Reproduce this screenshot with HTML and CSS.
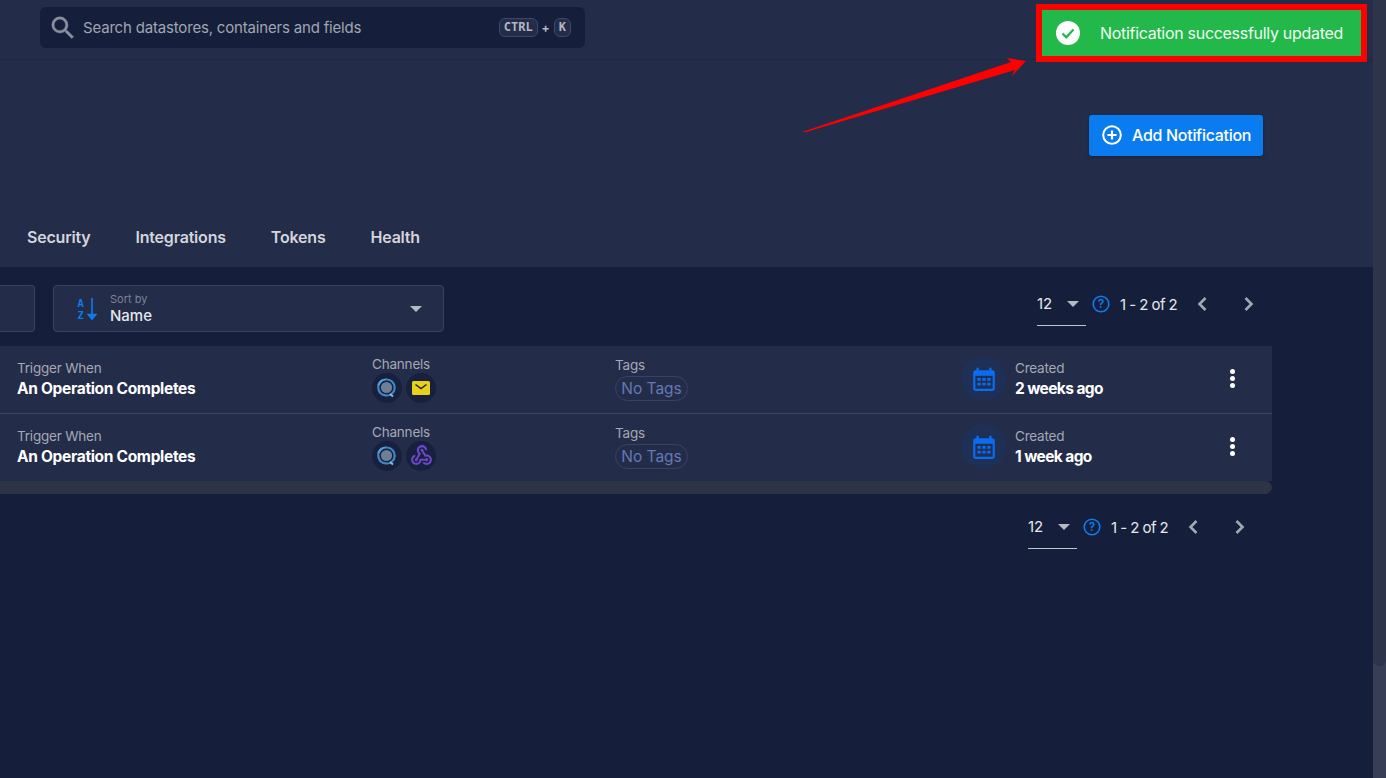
FILE: index.html
```html
<!DOCTYPE html>
<html lang="en">
<head>
    <meta charset="UTF-8">
    <meta name="viewport" content="width=device-width, initial-scale=1.0">
    <title>Settings - Notifications</title>
    <link rel="stylesheet" href="styles.css">
</head>
<body>
    <div class="page">
        <div class="content">
            <header class="top-section">
                <div class="topbar">
                    <div class="search">
                        <svg class="search-icon" viewBox="0 0 24 24" width="30" height="30"><path fill="#8b90a0" stroke="#8b90a0" stroke-width="0.3" d="M15.5 14h-.79l-.28-.27A6.47 6.47 0 0 0 16 9.5 6.5 6.5 0 1 0 9.5 16c1.61 0 3.09-.59 4.23-1.57l.27.28v.79l5 4.99L20.49 19l-4.99-5zm-6 0C7.01 14 5 11.99 5 9.5S7.01 5 9.5 5 14 7.01 14 9.5 11.99 14 9.5 14z"/></svg>
                        <span class="search-text">Search datastores, containers and fields</span>
                        <span class="keys"><kbd>CTRL</kbd><b>+</b><kbd>K</kbd></span>
                    </div>
                </div>
                <div class="action-row">
                    <button class="add-btn">
                        <svg viewBox="0 0 24 24" width="22" height="22"><circle cx="12" cy="12" r="9.6" fill="none" stroke="#fff" stroke-width="2.2"/><path d="M12 7v10M7 12h10" stroke="#fff" stroke-width="2.4"/></svg>
                        Add Notification
                    </button>
                </div>
                <nav class="tabs">
                    <a>Security</a>
                    <a>Integrations</a>
                    <a>Tokens</a>
                    <a>Health</a>
                </nav>
            </header>

            <main class="main">
                <div class="toolbar">
                    <div class="stub-box"></div>
                    <div class="sort-box">
                        <svg class="az-icon" viewBox="0 0 24 24" width="24" height="24">
                            <text x="0.5" y="9.5" class="az-letter">A</text>
                            <text x="0.5" y="22" class="az-letter">Z</text>
                            <path d="M15 1v19M11.2 17.5l3.800 4.700 3.800-4.700z" stroke="#0a7cf0" stroke-width="1.6" fill="#0a7cf0"/>
                        </svg>
                        <div class="sort-text">
                            <small>Sort by</small>
                            <span>Name</span>
                        </div>
                        <i class="caret sort-caret"></i>
                    </div>
                    <div class="pager">
                        <div class="per-page"><span>12</span><i class="caret"></i></div>
                        <svg class="help" viewBox="0 0 18 18" width="18" height="18"><circle cx="9" cy="9" r="7.800" fill="none" stroke="#0a7cf0" stroke-width="1.600"/><text x="9" y="13" class="help-mark">?</text></svg>
                        <span class="range">1 - 2 of 2</span>
                        <svg class="chev" viewBox="0 0 12 16" width="12" height="16"><path d="M9.500 2L3.500 8l6 6" fill="none" stroke="#a3a7b4" stroke-width="2.600"/></svg>
                        <svg class="chev chev-next" viewBox="0 0 12 16" width="12" height="16"><path d="M2.500 2l6 6-6 6" fill="none" stroke="#a3a7b4" stroke-width="2.600"/></svg>
                    </div>
                </div>

                <div class="list">
                    <div class="row">
                        <div class="cell">
                            <small>Trigger When</small>
                            <strong>An Operation Completes</strong>
                        </div>
                        <div class="cell cell-channels">
                            <small>Channels</small>
                            <div class="channels">
                                <span class="channel"><svg viewBox="0 0 30 30" width="30" height="30"><use href="#app-logo"/></svg></span>
                                <span class="channel"><svg viewBox="0 0 30 30" width="30" height="30"><rect x="6" y="8" width="18" height="14" rx="1.500" fill="#e8d118"/><path d="M9.500 11.500l5.500 4 5.500-4" fill="none" stroke="#1e2740" stroke-width="1.500"/></svg></span>
                            </div>
                        </div>
                        <div class="cell cell-tags">
                            <small>Tags</small>
                            <span class="chip">No Tags</span>
                        </div>
                        <div class="created">
                            <span class="cal"><svg viewBox="0 0 24 24" width="26" height="26"><use href="#calendar"/></svg></span>
                            <div class="cell">
                                <small>Created</small>
                                <strong>2 weeks ago</strong>
                            </div>
                        </div>
                        <div class="dots"><i></i><i></i><i></i></div>
                    </div>
                    <div class="row">
                        <div class="cell">
                            <small>Trigger When</small>
                            <strong>An Operation Completes</strong>
                        </div>
                        <div class="cell cell-channels">
                            <small>Channels</small>
                            <div class="channels">
                                <span class="channel"><svg viewBox="0 0 30 30" width="30" height="30"><use href="#app-logo"/></svg></span>
                                <span class="channel"><svg viewBox="0 0 24 24" width="25" height="25"><path fill="#6d45c9" d="M10 15h5.880c.27-.31.67-.5 1.120-.5.83 0 1.500.67 1.500 1.500s-.67 1.500-1.500 1.500c-.44 0-.84-.19-1.120-.5H11.900c-.46 2.280-2.480 4-4.900 4-2.760 0-5-2.240-5-5 0-2.420 1.720-4.440 4-4.900v2.070c-1.160.41-2 1.530-2 2.830 0 1.650 1.350 3 3 3s3-1.350 3-3v-1zm2.500-11c1.650 0 3 1.350 3 3h2c0-2.760-2.240-5-5-5s-5 2.240-5 5c0 1.430.6 2.710 1.550 3.620l-2.350 3.900c-.68.14-1.200.75-1.200 1.480 0 .83.67 1.500 1.500 1.500s1.500-.67 1.500-1.500c0-.16-.02-.31-.07-.45l3.380-5.630C10.490 9.610 9.500 8.420 9.500 7c0-1.650 1.350-3 3-3zm4.500 9c-.64 0-1.230.2-1.720.54l-3.050-5.070C11.530 8.350 11 7.740 11 7c0-.83.67-1.500 1.500-1.500S14 6.170 14 7c0 .15-.02.29-.06.43l2.190 3.650c.28-.05.57-.08.87-.08 2.760 0 5 2.240 5 5s-2.240 5-5 5c-1.850 0-3.470-1.010-4.330-2.500h2.670c.48.32 1.050.5 1.660.5 1.650 0 3-1.350 3-3s-1.350-3-3-3z"/></svg></span>
                            </div>
                        </div>
                        <div class="cell cell-tags">
                            <small>Tags</small>
                            <span class="chip">No Tags</span>
                        </div>
                        <div class="created">
                            <span class="cal"><svg viewBox="0 0 24 24" width="26" height="26"><use href="#calendar"/></svg></span>
                            <div class="cell">
                                <small>Created</small>
                                <strong>1 week ago</strong>
                            </div>
                        </div>
                        <div class="dots"><i></i><i></i><i></i></div>
                    </div>
                    <div class="hscroll"></div>
                </div>

                <div class="pager pager-bottom">
                    <div class="per-page"><span>12</span><i class="caret"></i></div>
                    <svg class="help" viewBox="0 0 18 18" width="18" height="18"><circle cx="9" cy="9" r="7.800" fill="none" stroke="#0a7cf0" stroke-width="1.600"/><text x="9" y="13" class="help-mark">?</text></svg>
                    <span class="range">1 - 2 of 2</span>
                    <svg class="chev" viewBox="0 0 12 16" width="12" height="16"><path d="M9.500 2L3.500 8l6 6" fill="none" stroke="#a3a7b4" stroke-width="2.600"/></svg>
                    <svg class="chev chev-next" viewBox="0 0 12 16" width="12" height="16"><path d="M2.500 2l6 6-6 6" fill="none" stroke="#a3a7b4" stroke-width="2.600"/></svg>
                </div>
            </main>
        </div>

        <div class="vscroll"><div class="vscroll-thumb"></div></div>
    </div>

    <!-- annotation drawn over the page -->
    <div class="toast">
        <svg viewBox="0 0 24 24" width="24" height="24"><circle cx="12" cy="12" r="12" fill="#fff"/><path d="M6.500 12.500l3.800 3.800 7.200-7.800" fill="none" stroke="#22b84a" stroke-width="2.200"/></svg>
        <span>Notification successfully updated</span>
    </div>
    <svg class="arrow" viewBox="0 0 240 90" width="240" height="90"><polygon fill="#fe0000" points="2,83 211,13 207,9 226,12 211,28 215,21 6,83"/></svg>

    <svg class="defs" width="0" height="0">
        <defs>
            <g id="app-logo">
                <circle cx="14.500" cy="14.500" r="5.600" fill="#6f7f97"/>
                <path d="M14.500 6.500a8 8 0 1 1-1 15.900 8 8 0 0 1-3-15" fill="none" stroke="#3f87c6" stroke-width="2.200"/>
                <path d="M6.600 12a8 8 0 0 1 8-5.500" fill="none" stroke="#4fa0dc" stroke-width="2.200"/>
                <path d="M18 21l3 2.500" stroke="#8fb7d8" stroke-width="2"/>
            </g>
            <g id="calendar">
                <path fill="#0a6cf0" d="M5 1.500h2.200V4h9.600V1.500H19V4h.5A2.500 2.500 0 0 1 22 6.500v14a2.500 2.500 0 0 1-2.500 2.500h-15A2.500 2.500 0 0 1 2 20.500v-14A2.500 2.500 0 0 1 4.500 4H5z"/>
                <rect x="4" y="9" width="16" height="12" fill="#1f3057"/>
                <path fill="#0a6cf0" d="M6 11h3v2.500H6zM10.500 11h3v2.500h-3zM15 11h3v2.500h-3zM6 15.500h3V18H6zM10.500 15.500h3V18h-3zM15 15.500h3V18h-3z"/>
            </g>
        </defs>
    </svg>
</body>
</html>
```

FILE: styles.css
```css
/* Notifications page */
* {
    box-sizing: border-box;
}

body {
    margin: 0;
    padding: 0;
    height: 778px;
    overflow: hidden;
    position: relative;
    font-family: Inter, "Noto Sans", sans-serif;
    background-color: #151f3b;
    color: #fff;
}

.page {
    display: flex;
    height: 778px;
}

.content {
    flex: 1;
    min-width: 0;
}

/* Top section */
.top-section {
    height: 267px;
    background-color: #232c49;
}

.topbar {
    height: 60px;
    padding: 7px 0 0 40px;
    border-bottom: 1px solid #202944;
}

.search {
    display: flex;
    align-items: center;
    width: 545px;
    height: 41px;
    padding: 0 14px 0 8px;
    background-color: #151f3b;
    border-radius: 6px;
}

.search-icon {
    margin-right: 5px;
}

.search-text {
    flex: 1;
    font-size: 15px;
    letter-spacing: -0.18px;
    color: #a1a5b1;
}

.keys {
    display: flex;
    align-items: center;
    gap: 4px;
    font-size: 12px;
    color: #b4b7c2;
}

.keys kbd {
    padding: 1px 4px;
    height: 19px;
    font-family: "DejaVu Sans Mono", monospace;
    font-size: 12px;
    font-weight: 700;
    line-height: 15px;
    border: 1px solid #3f4763;
    border-radius: 6px;
    background-color: #232c49;
}

.action-row {
    display: flex;
    justify-content: flex-end;
    padding: 55px 110px 0 0;
}

.add-btn {
    display: flex;
    align-items: center;
    gap: 9px;
    width: 174px;
    height: 41px;
    padding: 0 0 2px 12px;
    border: 0;
    border-radius: 3px;
    font-family: inherit;
    font-size: 16px;
    font-weight: 500;
    letter-spacing: -0.3px;
    color: #fff;
    background-color: #0a7cf0;
    box-shadow: 0 1px 3px rgba(0, 0, 0, 0.3);
}

.tabs {
    display: flex;
    gap: 45px;
    padding: 71px 0 0 27px;
}

.tabs a {
    font-size: 16px;
    font-weight: 600;
    letter-spacing: -0.2px;
    line-height: 20px;
    color: #d3d5db;
}

/* Main area */
.main {
    padding-top: 18px;
}

.toolbar {
    display: flex;
    align-items: flex-start;
    height: 47px;
}

.stub-box {
    width: 35px;
    height: 47px;
    margin-right: 18px;
    background-color: #232c49;
    border: 1px solid #3a4261;
    border-left: 0;
    border-radius: 0 4px 4px 0;
}

.sort-box {
    display: flex;
    align-items: center;
    width: 391px;
    height: 47px;
    padding: 0 21px 0 23px;
    background-color: #232c49;
    border: 1px solid #3a4261;
    border-radius: 4px;
}

.az-icon {
    margin-right: 9px;
}

.az-letter {
    font-family: "DejaVu Sans Mono", monospace;
    font-size: 10.5px;
    font-weight: 700;
    fill: #0a7cf0;
}

.sort-text {
    flex: 1;
    display: flex;
    flex-direction: column;
}

.sort-text small {
    font-size: 11px;
    line-height: 13px;
    color: #7e8394;
}

.sort-text span {
    font-size: 15px;
    font-weight: 500;
    line-height: 19px;
    color: #e6e7eb;
}

.caret {
    display: block;
    width: 0;
    height: 0;
    border-left: 6px solid transparent;
    border-right: 6px solid transparent;
    border-top: 6px solid #b6b9c3;
}

/* Pagination */
.pager {
    display: flex;
    align-items: center;
    margin-left: auto;
    margin-right: 118px;
    height: 38px;
    font-size: 15px;
    color: #e6e7eb;
}

.per-page {
    display: flex;
    align-items: center;
    justify-content: space-between;
    width: 49px;
    height: 44px;
    padding: 0 7px 0 0;
    border-bottom: 1px solid #c3c5cd;
    margin-right: 6px;
}

.help {
    margin-right: 10px;
}

.help-mark {
    font-size: 12px;
    font-weight: 600;
    text-anchor: middle;
    fill: #0a7cf0;
}

.range {
    width: 72px;
    letter-spacing: -0.55px;
    margin-right: 4px;
}

.chev-next {
    margin-left: 35px;
}

.pager-bottom {
    justify-content: flex-end;
    margin: 14px 127px 0 0;
}

/* Rows */
.list {
    margin-top: 14px;
    width: 1272px;
}

.row {
    display: grid;
    grid-template-columns: 355px 243px 346px 263px auto;
    align-items: center;
    height: 68px;
    padding: 0 0 2px 17px;
    background-color: #232c49;
    border-bottom: 1px solid #3e4660;
}

.row + .row {
    height: 67px;
    border-bottom: 0;
}

.cell {
    display: flex;
    flex-direction: column;
}

.cell small {
    font-size: 13.5px;
    letter-spacing: -0.2px;
    line-height: 20px;
    color: #a5a8b5;
}

.cell strong {
    font-size: 15.5px;
    font-weight: 700;
    letter-spacing: -0.32px;
    line-height: 21px;
    color: #fff;
}

.created strong {
    letter-spacing: -0.6px;
}

.cell-channels {
    margin-top: -1px;
}

.channels {
    display: flex;
    gap: 4px;
    margin-top: -1px;
}

.channel {
    display: flex;
    align-items: center;
    justify-content: center;
    width: 30px;
    height: 30px;
    background-color: #17213d;
    border-radius: 50%;
}

.cell-tags {
    margin-top: -2px;
}

.chip {
    align-self: flex-start;
    width: 73px;
    height: 25px;
    margin-top: 1px;
    font-size: 15.5px;
    line-height: 23px;
    text-align: center;
    color: #6579b3;
    border: 1px solid #3a4261;
    border-radius: 13px;
}

.created {
    display: flex;
    align-items: center;
    gap: 9px;
}

.cal {
    display: flex;
    align-items: center;
    justify-content: center;
    width: 45px;
    height: 45px;
    background-color: #1f3057;
    border-radius: 50%;
}

.dots {
    display: flex;
    flex-direction: column;
    gap: 2px;
    width: 5px;
    margin-left: 6px;
}

.dots i {
    display: block;
    width: 5px;
    height: 5px;
    background-color: #fff;
    border-radius: 50%;
}

.hscroll {
    height: 13px;
    background-color: #2f3346;
    border-radius: 0 7px 7px 0;
}

/* Page scrollbar */
.vscroll {
    width: 13px;
    height: 778px;
    background-color: #383e56;
}

.vscroll-thumb {
    height: 666px;
    background-color: #2e344a;
    border-radius: 0 0 6px 6px;
}

/* Annotation */
.toast {
    position: absolute;
    top: 4px;
    left: 1036px;
    display: flex;
    align-items: center;
    width: 331px;
    height: 58px;
    padding-left: 14px;
    gap: 20px;
    font-size: 16px;
    letter-spacing: -0.3px;
    color: #f2fbf4;
    background-color: #22b84a;
    border: 6px solid #fe0000;
}

.arrow {
    position: absolute;
    top: 49px;
    left: 800px;
}

.defs {
    position: absolute;
}
```
